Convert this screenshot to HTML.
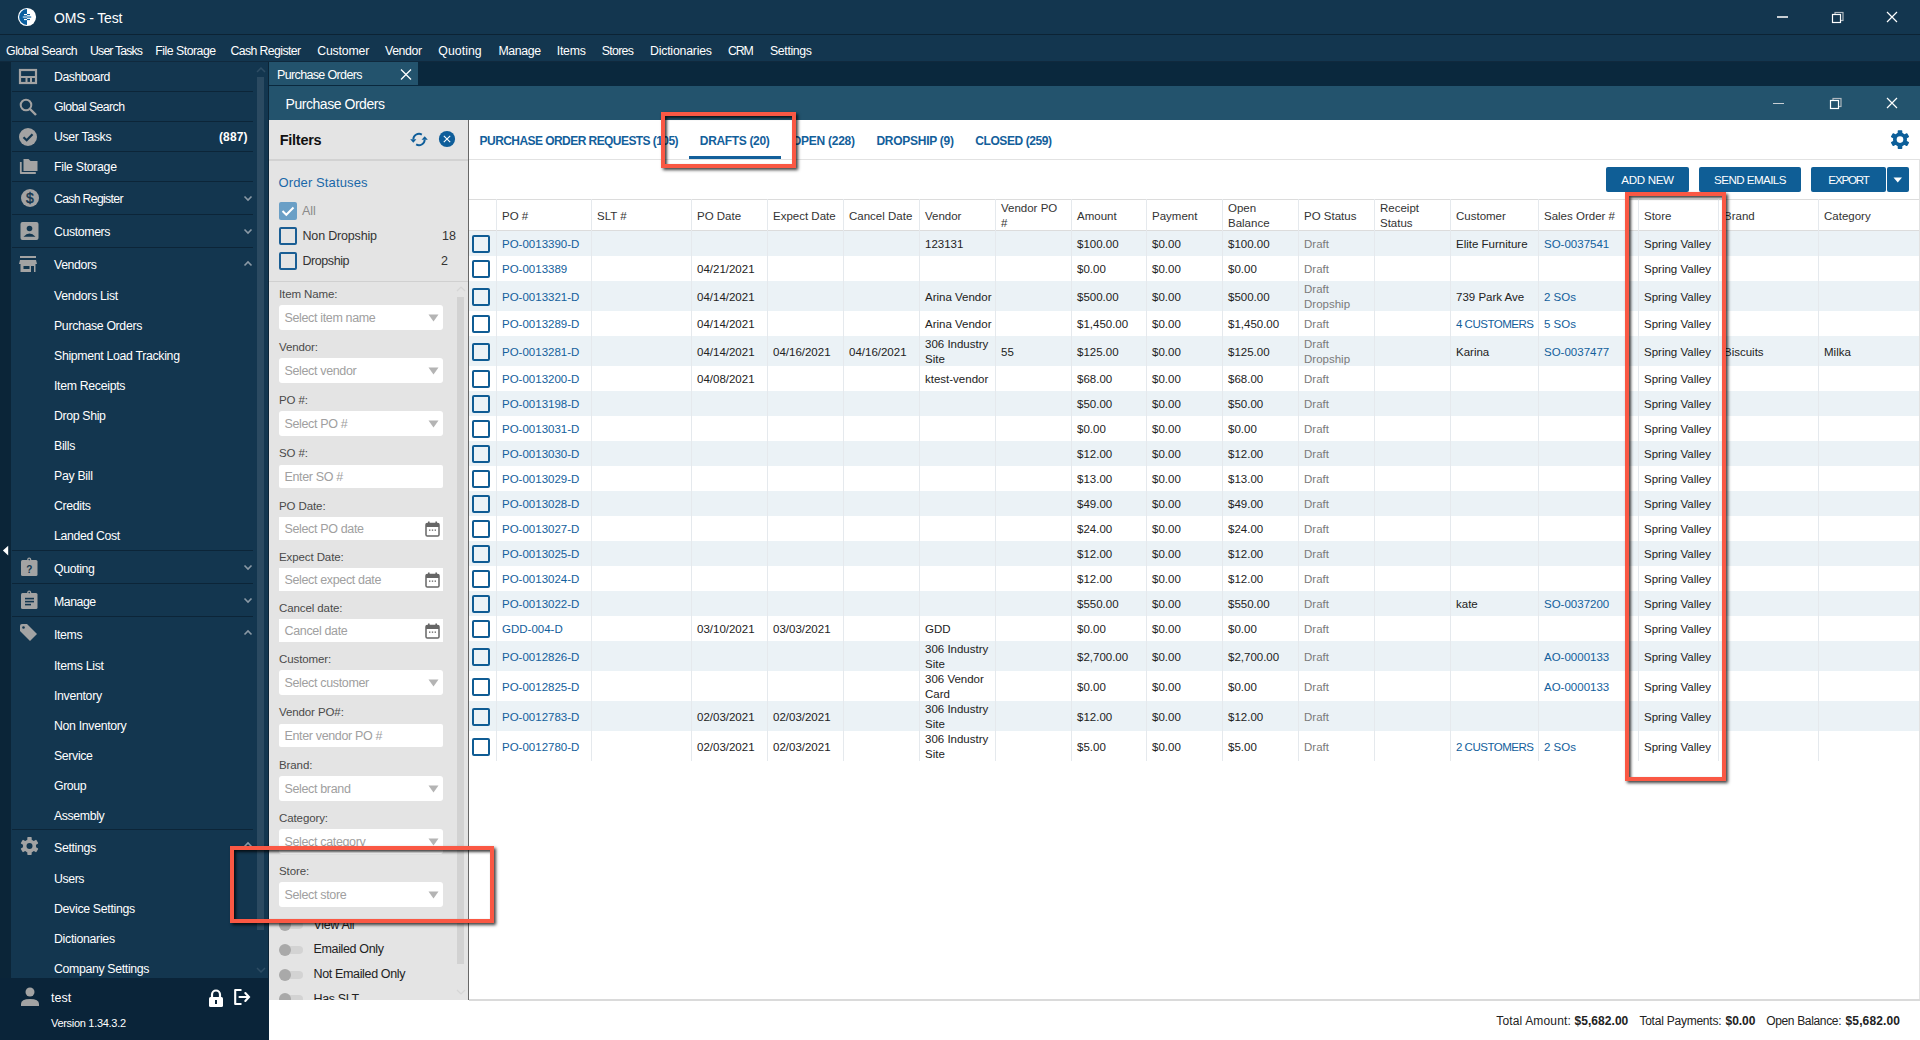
<!DOCTYPE html>
<html><head><meta charset="utf-8"><title>Purchase Orders</title>
<style>
html,body{margin:0;padding:0;width:1920px;height:1040px;overflow:hidden;background:#fff;}
body{position:relative;font-family:"Liberation Sans", sans-serif;}
body>div,body>svg{position:absolute;}
</style></head><body>
<div style="left:0px;top:0px;width:1920px;height:34px;background:#13364f;"></div>
<div style="left:0px;top:34px;width:1920px;height:1px;background:#0c2334;"></div>
<svg style="left:17px;top:7px;" width="20" height="20" viewBox="0 0 20 20"><circle cx="10" cy="10" r="9.1" fill="#fff"/><path d="M10 2.1 A7.9 7.9 0 0 0 10 17.9 Z" fill="#0b5f9f"/><rect x="7" y="7" width="3" height="1.2" fill="#fff"/><rect x="10" y="7" width="3" height="1.2" fill="#0b5f9f"/><rect x="5.8" y="9.3" width="4.2" height="1.5" fill="#a8c8de"/><rect x="10" y="9.3" width="4.2" height="1.5" fill="#3f86b8"/><rect x="7" y="11.9" width="3" height="1.2" fill="#fff"/><rect x="10" y="11.9" width="3" height="1.2" fill="#0b5f9f"/></svg>
<div style="left:54px;top:11.15px;font-size:14px;line-height:14px;color:#fff;font-weight:400;letter-spacing:-0.141px;white-space:nowrap;">OMS - Test</div>
<div style="left:1777px;top:16px;width:11px;height:1.5px;background:#c8ced3;"></div>
<svg style="left:1830px;top:10px;" width="16" height="14" viewBox="0 0 16 14"><rect x="5" y="2.5" width="8" height="8" fill="none" stroke="#aeb7bf" stroke-width="1.2"/><rect x="2.5" y="4.5" width="8" height="8" fill="#13364f" stroke="#fff" stroke-width="1.2"/></svg>
<svg style="left:1886px;top:11px;" width="12" height="12" viewBox="0 0 12 12"><path d="M1 1 L11 11 M11 1 L1 11" stroke="#fff" stroke-width="1.2"/></svg>
<div style="left:0px;top:35px;width:1920px;height:27px;background:#13364f;"></div>
<div style="left:0px;top:61px;width:1920px;height:1px;background:#10293d;"></div>
<div style="left:6.1px;top:44.59px;font-size:12.3px;line-height:12.3px;color:#fff;font-weight:400;letter-spacing:-0.528px;white-space:nowrap;">Global Search</div>
<div style="left:90.1px;top:44.59px;font-size:12.3px;line-height:12.3px;color:#fff;font-weight:400;letter-spacing:-0.866px;white-space:nowrap;">User Tasks</div>
<div style="left:155.3px;top:44.59px;font-size:12.3px;line-height:12.3px;color:#fff;font-weight:400;letter-spacing:-0.501px;white-space:nowrap;">File Storage</div>
<div style="left:230.4px;top:44.59px;font-size:12.3px;line-height:12.3px;color:#fff;font-weight:400;letter-spacing:-0.593px;white-space:nowrap;">Cash Register</div>
<div style="left:317.2px;top:44.59px;font-size:12.3px;line-height:12.3px;color:#fff;font-weight:400;letter-spacing:-0.173px;white-space:nowrap;">Customer</div>
<div style="left:385px;top:44.59px;font-size:12.3px;line-height:12.3px;color:#fff;font-weight:400;letter-spacing:-0.397px;white-space:nowrap;">Vendor</div>
<div style="left:438.3px;top:44.59px;font-size:12.3px;line-height:12.3px;color:#fff;font-weight:400;letter-spacing:0.054px;white-space:nowrap;">Quoting</div>
<div style="left:498.4px;top:44.59px;font-size:12.3px;line-height:12.3px;color:#fff;font-weight:400;letter-spacing:-0.351px;white-space:nowrap;">Manage</div>
<div style="left:556.8px;top:44.59px;font-size:12.3px;line-height:12.3px;color:#fff;font-weight:400;letter-spacing:-0.270px;white-space:nowrap;">Items</div>
<div style="left:601.8px;top:44.59px;font-size:12.3px;line-height:12.3px;color:#fff;font-weight:400;letter-spacing:-0.709px;white-space:nowrap;">Stores</div>
<div style="left:650px;top:44.59px;font-size:12.3px;line-height:12.3px;color:#fff;font-weight:400;letter-spacing:-0.205px;white-space:nowrap;">Dictionaries</div>
<div style="left:728px;top:44.59px;font-size:12.3px;line-height:12.3px;color:#fff;font-weight:400;letter-spacing:-1.108px;white-space:nowrap;">CRM</div>
<div style="left:770px;top:44.59px;font-size:12.3px;line-height:12.3px;color:#fff;font-weight:400;letter-spacing:-0.348px;white-space:nowrap;">Settings</div>
<div style="left:0px;top:62px;width:11px;height:978px;background:#0b2538;"></div>
<div style="left:11px;top:62px;width:257px;height:916px;background:#13364f;"></div>
<div style="left:268px;top:62px;width:1px;height:916px;background:#0c2436;"></div>
<div style="left:0px;top:978px;width:269px;height:62px;background:#0a2439;"></div>
<svg style="left:2px;top:545px;" width="8" height="12" viewBox="0 0 8 12"><path d="M6.2 0.7 v9.8 l-5.3 -4.9 z" fill="#fff"/></svg>
<div style="left:257px;top:77px;width:7px;height:853px;background:#2b4a61;"></div>
<svg style="left:255px;top:66px;" width="12" height="8" viewBox="0 0 12 8"><path d="M2 6 L6 2 L10 6" fill="none" stroke="#2e4d64" stroke-width="1.5"/></svg>
<svg style="left:255px;top:966px;" width="12" height="8" viewBox="0 0 12 8"><path d="M2 2 L6 6 L10 2" fill="none" stroke="#2e4d64" stroke-width="1.5"/></svg>
<div style="left:54px;top:71.09px;font-size:12.3px;line-height:12.3px;color:#fff;font-weight:400;letter-spacing:-0.471px;white-space:nowrap;">Dashboard</div>
<div style="left:54px;top:101.09px;font-size:12.3px;line-height:12.3px;color:#fff;font-weight:400;letter-spacing:-0.578px;white-space:nowrap;">Global Search</div>
<div style="left:54px;top:131.09px;font-size:12.3px;line-height:12.3px;color:#fff;font-weight:400;letter-spacing:-0.337px;white-space:nowrap;">User Tasks</div>
<div style="left:54px;top:161.09px;font-size:12.3px;line-height:12.3px;color:#fff;font-weight:400;letter-spacing:-0.301px;white-space:nowrap;">File Storage</div>
<div style="left:54px;top:192.59px;font-size:12.3px;line-height:12.3px;color:#fff;font-weight:400;letter-spacing:-0.702px;white-space:nowrap;">Cash Register</div>
<div style="left:54px;top:225.59px;font-size:12.3px;line-height:12.3px;color:#fff;font-weight:400;letter-spacing:-0.372px;white-space:nowrap;">Customers</div>
<div style="left:54px;top:259.09px;font-size:12.3px;line-height:12.3px;color:#fff;font-weight:400;letter-spacing:-0.376px;white-space:nowrap;">Vendors</div>
<div style="left:12px;top:91px;width:241px;height:1px;background:#0c2538;"></div>
<div style="left:12px;top:121px;width:241px;height:1px;background:#0c2538;"></div>
<div style="left:12px;top:151px;width:241px;height:1px;background:#0c2538;"></div>
<div style="left:12px;top:181px;width:241px;height:1px;background:#0c2538;"></div>
<div style="left:12px;top:214px;width:241px;height:1px;background:#0c2538;"></div>
<div style="left:12px;top:247px;width:241px;height:1px;background:#0c2538;"></div>
<div style="left:12px;top:550px;width:241px;height:1px;background:#0c2538;"></div>
<div style="left:12px;top:583px;width:241px;height:1px;background:#0c2538;"></div>
<div style="left:12px;top:616px;width:241px;height:1px;background:#0c2538;"></div>
<div style="left:12px;top:829px;width:241px;height:1px;background:#0c2538;"></div>
<div style="left:219px;top:130.84px;font-size:12px;line-height:12px;color:#fff;font-weight:700;letter-spacing:0.121px;white-space:nowrap;">(887)</div>
<svg style="left:243px;top:195px;" width="10" height="7" viewBox="0 0 10 7"><path d="M1.5 1.5 L5 5 L8.5 1.5" fill="none" stroke="#8a99a5" stroke-width="1.6"/></svg>
<svg style="left:243px;top:228px;" width="10" height="7" viewBox="0 0 10 7"><path d="M1.5 1.5 L5 5 L8.5 1.5" fill="none" stroke="#8a99a5" stroke-width="1.6"/></svg>
<svg style="left:243px;top:260px;" width="10" height="7" viewBox="0 0 10 7"><path d="M1.5 5.5 L5 2 L8.5 5.5" fill="none" stroke="#8a99a5" stroke-width="1.6"/></svg>
<div style="left:54px;top:290.09px;font-size:12.3px;line-height:12.3px;color:#fff;font-weight:400;letter-spacing:-0.308px;white-space:nowrap;">Vendors List</div>
<div style="left:54px;top:320.09px;font-size:12.3px;line-height:12.3px;color:#fff;font-weight:400;letter-spacing:-0.332px;white-space:nowrap;">Purchase Orders</div>
<div style="left:54px;top:350.09px;font-size:12.3px;line-height:12.3px;color:#fff;font-weight:400;letter-spacing:-0.316px;white-space:nowrap;">Shipment Load Tracking</div>
<div style="left:54px;top:380.09px;font-size:12.3px;line-height:12.3px;color:#fff;font-weight:400;letter-spacing:-0.313px;white-space:nowrap;">Item Receipts</div>
<div style="left:54px;top:410.09px;font-size:12.3px;line-height:12.3px;color:#fff;font-weight:400;letter-spacing:-0.342px;white-space:nowrap;">Drop Ship</div>
<div style="left:54px;top:440.09px;font-size:12.3px;line-height:12.3px;color:#fff;font-weight:400;letter-spacing:-0.282px;white-space:nowrap;">Bills</div>
<div style="left:54px;top:470.09px;font-size:12.3px;line-height:12.3px;color:#fff;font-weight:400;letter-spacing:-0.293px;white-space:nowrap;">Pay Bill</div>
<div style="left:54px;top:500.09px;font-size:12.3px;line-height:12.3px;color:#fff;font-weight:400;letter-spacing:-0.325px;white-space:nowrap;">Credits</div>
<div style="left:54px;top:530.09px;font-size:12.3px;line-height:12.3px;color:#fff;font-weight:400;letter-spacing:-0.349px;white-space:nowrap;">Landed Cost</div>
<div style="left:54px;top:562.59px;font-size:12.3px;line-height:12.3px;color:#fff;font-weight:400;letter-spacing:-0.359px;white-space:nowrap;">Quoting</div>
<div style="left:54px;top:595.59px;font-size:12.3px;line-height:12.3px;color:#fff;font-weight:400;letter-spacing:-0.445px;white-space:nowrap;">Manage</div>
<div style="left:54px;top:628.59px;font-size:12.3px;line-height:12.3px;color:#fff;font-weight:400;letter-spacing:-0.376px;white-space:nowrap;">Items</div>
<svg style="left:243px;top:564px;" width="10" height="7" viewBox="0 0 10 7"><path d="M1.5 1.5 L5 5 L8.5 1.5" fill="none" stroke="#8a99a5" stroke-width="1.6"/></svg>
<svg style="left:243px;top:597px;" width="10" height="7" viewBox="0 0 10 7"><path d="M1.5 1.5 L5 5 L8.5 1.5" fill="none" stroke="#8a99a5" stroke-width="1.6"/></svg>
<svg style="left:243px;top:629px;" width="10" height="7" viewBox="0 0 10 7"><path d="M1.5 5.5 L5 2 L8.5 5.5" fill="none" stroke="#8a99a5" stroke-width="1.6"/></svg>
<div style="left:54px;top:660.09px;font-size:12.3px;line-height:12.3px;color:#fff;font-weight:400;letter-spacing:-0.292px;white-space:nowrap;">Items List</div>
<div style="left:54px;top:690.09px;font-size:12.3px;line-height:12.3px;color:#fff;font-weight:400;letter-spacing:-0.316px;white-space:nowrap;">Inventory</div>
<div style="left:54px;top:720.09px;font-size:12.3px;line-height:12.3px;color:#fff;font-weight:400;letter-spacing:-0.319px;white-space:nowrap;">Non Inventory</div>
<div style="left:54px;top:750.09px;font-size:12.3px;line-height:12.3px;color:#fff;font-weight:400;letter-spacing:-0.342px;white-space:nowrap;">Service</div>
<div style="left:54px;top:780.09px;font-size:12.3px;line-height:12.3px;color:#fff;font-weight:400;letter-spacing:-0.427px;white-space:nowrap;">Group</div>
<div style="left:54px;top:810.09px;font-size:12.3px;line-height:12.3px;color:#fff;font-weight:400;letter-spacing:-0.381px;white-space:nowrap;">Assembly</div>
<div style="left:54px;top:841.59px;font-size:12.3px;line-height:12.3px;color:#fff;font-weight:400;letter-spacing:-0.317px;white-space:nowrap;">Settings</div>
<svg style="left:243px;top:841px;" width="10" height="7" viewBox="0 0 10 7"><path d="M1.5 5.5 L5 2 L8.5 5.5" fill="none" stroke="#8a99a5" stroke-width="1.6"/></svg>
<div style="left:54px;top:873.09px;font-size:12.3px;line-height:12.3px;color:#fff;font-weight:400;letter-spacing:-0.402px;white-space:nowrap;">Users</div>
<div style="left:54px;top:903.09px;font-size:12.3px;line-height:12.3px;color:#fff;font-weight:400;letter-spacing:-0.305px;white-space:nowrap;">Device Settings</div>
<div style="left:54px;top:933.09px;font-size:12.3px;line-height:12.3px;color:#fff;font-weight:400;letter-spacing:-0.292px;white-space:nowrap;">Dictionaries</div>
<div style="left:54px;top:963.09px;font-size:12.3px;line-height:12.3px;color:#fff;font-weight:400;letter-spacing:-0.335px;white-space:nowrap;">Company Settings</div>
<div style="left:0px;top:978px;width:269px;height:62px;background:#0a2439;"></div>
<div style="left:51px;top:992.42px;font-size:12.5px;line-height:12.5px;color:#fff;font-weight:400;letter-spacing:0.000px;white-space:nowrap;">test</div>
<div style="left:51px;top:1017.69px;font-size:11px;line-height:11px;color:#fff;font-weight:400;letter-spacing:-0.300px;white-space:nowrap;">Version 1.34.3.2</div>
<svg style="left:18px;top:68px;" width="20" height="17" viewBox="0 0 20 17"><rect x="2" y="2" width="16" height="13" fill="none" stroke="#a3a3a3" stroke-width="2.2"/><rect x="2" y="8" width="16" height="2" fill="#a3a3a3"/><rect x="7.5" y="9" width="2" height="6" fill="#a3a3a3"/><rect x="12" y="9" width="2" height="6" fill="#a3a3a3"/></svg>
<svg style="left:18px;top:97px;" width="20" height="20" viewBox="0 0 20 20"><circle cx="8" cy="8" r="5.3" fill="none" stroke="#a3a3a3" stroke-width="2"/><path d="M12 12 L18 18" stroke="#a3a3a3" stroke-width="2.4"/></svg>
<svg style="left:18px;top:127px;" width="20" height="20" viewBox="0 0 20 20"><circle cx="10" cy="10" r="9" fill="#a3a3a3"/><path d="M5.5 10.2 L8.7 13.3 L14.5 7.2" fill="none" stroke="#13364f" stroke-width="2.2"/></svg>
<svg style="left:19px;top:157px;" width="20" height="18" viewBox="0 0 20 18"><path d="M4.5 2 h5 l2 2 h7 v10 h-14 z" fill="#a3a3a3"/><path d="M1.8 5 v11 h15" fill="none" stroke="#a3a3a3" stroke-width="1.8" stroke-linejoin="round"/></svg>
<svg style="left:19.5px;top:188px;" width="20" height="20" viewBox="0 0 20 20"><circle cx="10" cy="10" r="9" fill="#a3a3a3"/><text x="10" y="15" font-family="Liberation Sans" font-weight="400" font-size="14" text-anchor="middle" fill="#13364f" stroke="#13364f" stroke-width="0.4">$</text></svg>
<svg style="left:19px;top:221px;" width="20" height="20" viewBox="0 0 20 20"><rect x="1.5" y="1" width="18" height="18" rx="2" fill="#a3a3a3"/><circle cx="10.5" cy="7.5" r="2.8" fill="#13364f"/><path d="M4.5 15.8 q6 -6.5 12 0 z" fill="#13364f"/></svg>
<svg style="left:18px;top:255px;" width="20" height="19" viewBox="0 0 20 19"><rect x="2" y="1" width="16" height="2" fill="#a3a3a3"/><path d="M2 5 h16 l1 4 h-18 z" fill="#a3a3a3"/><rect x="2.5" y="9" width="15" height="8" fill="#a3a3a3"/><rect x="5.5" y="11" width="6" height="3" fill="#13364f"/><rect x="13" y="11" width="3" height="6" fill="#13364f"/></svg>
<svg style="left:18px;top:557px;" width="21" height="20" viewBox="0 0 21 20"><rect x="3" y="3" width="16.5" height="16" rx="1.5" fill="#a3a3a3"/><circle cx="11.2" cy="2.6" r="2" fill="#a3a3a3"/><circle cx="11.2" cy="2.6" r="0.8" fill="#13364f"/><text x="11.2" y="15.5" font-family="Liberation Sans" font-weight="700" font-size="10" text-anchor="middle" fill="#13364f">?</text></svg>
<svg style="left:18px;top:590px;" width="21" height="20" viewBox="0 0 21 20"><rect x="3" y="3" width="16.5" height="16" rx="1.5" fill="#a3a3a3"/><circle cx="11.2" cy="2.6" r="2" fill="#a3a3a3"/><circle cx="11.2" cy="2.6" r="0.8" fill="#13364f"/><rect x="7" y="7.8" width="9" height="1.6" fill="#13364f"/><rect x="7" y="10.8" width="9" height="1.6" fill="#13364f"/><rect x="7" y="13.8" width="6" height="1.6" fill="#13364f"/></svg>
<svg style="left:18px;top:623px;" width="20" height="20" viewBox="0 0 20 20"><path d="M2 3 q0 -2 2 -2 h5 l10 10 l-7 7 l-10 -10 z" fill="#a3a3a3"/><circle cx="5.5" cy="4.5" r="1.3" fill="#13364f"/></svg>
<svg style="left:19px;top:836px;" width="21" height="20" viewBox="0 0 21 20"><circle cx="10.5" cy="10" r="6.6" fill="#a3a3a3"/><rect x="8.3" y="1.0" width="4.4" height="4.4" rx="0.7" fill="#a3a3a3" transform="rotate(0 10.5 10)"/><rect x="8.3" y="1.0" width="4.4" height="4.4" rx="0.7" fill="#a3a3a3" transform="rotate(60 10.5 10)"/><rect x="8.3" y="1.0" width="4.4" height="4.4" rx="0.7" fill="#a3a3a3" transform="rotate(120 10.5 10)"/><rect x="8.3" y="1.0" width="4.4" height="4.4" rx="0.7" fill="#a3a3a3" transform="rotate(180 10.5 10)"/><rect x="8.3" y="1.0" width="4.4" height="4.4" rx="0.7" fill="#a3a3a3" transform="rotate(240 10.5 10)"/><rect x="8.3" y="1.0" width="4.4" height="4.4" rx="0.7" fill="#a3a3a3" transform="rotate(300 10.5 10)"/><circle cx="10.5" cy="10" r="3.0" fill="#13364f"/></svg>
<svg style="left:20px;top:987px;" width="20" height="20" viewBox="0 0 20 20"><circle cx="10" cy="5" r="4.5" fill="#a3a3a3"/><path d="M1 19 v-2 q0 -5 9 -5 q9 0 9 5 v2 z" fill="#a3a3a3"/></svg>
<svg style="left:208px;top:988.6px;" width="16" height="18" viewBox="0 0 16 18"><path d="M4 8 v-2.5 a4 4 0 0 1 8 0 v2.5" fill="none" stroke="#fff" stroke-width="2.2"/><rect x="1" y="8" width="14" height="10" rx="1.5" fill="#fff"/><rect x="7" y="11" width="2" height="4" fill="#0a2439"/></svg>
<svg style="left:233px;top:988px;" width="18" height="18" viewBox="0 0 18 18"><path d="M8.5 2 h-6.3 v14 h6.3" fill="none" stroke="#fff" stroke-width="2.1" stroke-linejoin="round"/><path d="M6.5 9 h9 M12.3 5 L16 9 L12.3 13" fill="none" stroke="#fff" stroke-width="2.1" stroke-linecap="round"/></svg>
<div style="left:269px;top:62px;width:1651px;height:24px;background:#0a283d;"></div>
<div style="left:269px;top:62px;width:149px;height:23px;background:#23536d;"></div>
<div style="left:277px;top:68.92px;font-size:12.5px;line-height:12.5px;color:#fff;font-weight:400;letter-spacing:-0.642px;white-space:nowrap;">Purchase Orders</div>
<svg style="left:400px;top:69px;" width="12" height="11" viewBox="0 0 12 11"><path d="M1 0.5 L11 10.5 M11 0.5 L1 10.5" stroke="#fff" stroke-width="1.3"/></svg>
<div style="left:269px;top:86px;width:1651px;height:34px;background:#23536d;"></div>
<div style="left:285.5px;top:97.45px;font-size:14px;line-height:14px;color:#fff;font-weight:400;letter-spacing:-0.452px;white-space:nowrap;">Purchase Orders</div>
<div style="left:1773px;top:102.5px;width:11px;height:1.5px;background:#c8ced3;"></div>
<svg style="left:1828px;top:96px;" width="16" height="14" viewBox="0 0 16 14"><rect x="5" y="2.5" width="8" height="8" fill="none" stroke="#aeb7bf" stroke-width="1.2"/><rect x="2.5" y="4.5" width="8" height="8" fill="#23536d" stroke="#fff" stroke-width="1.2"/></svg>
<svg style="left:1886px;top:97px;" width="12" height="12" viewBox="0 0 12 12"><path d="M1 1 L11 11 M11 1 L1 11" stroke="#fff" stroke-width="1.2"/></svg>
<div style="left:269px;top:120px;width:199px;height:880px;background:#e4e4e4;"></div>
<div style="left:468px;top:120px;width:1px;height:880px;background:#676767;"></div>
<div style="left:279.7px;top:132.73px;font-size:14.5px;line-height:14.5px;color:#111;font-weight:700;letter-spacing:-0.253px;white-space:nowrap;">Filters</div>
<svg style="left:408px;top:130px;" width="22" height="18" viewBox="0 0 22 18"><path d="M13.85 4.56 A5.7 5.7 0 0 0 5.3 9.3" fill="none" stroke="#0f5e9a" stroke-width="1.9"/><path d="M2.2 9.3 h6.2 l-3.1 3.4 z" fill="#0f5e9a"/><path d="M8.15 14.44 A5.7 5.7 0 0 0 16.7 9.7" fill="none" stroke="#0f5e9a" stroke-width="1.9"/><path d="M13.6 9.7 h6.2 l-3.1 -3.4 z" fill="#0f5e9a"/></svg>
<svg style="left:438px;top:130px;" width="18" height="18" viewBox="0 0 18 18"><circle cx="9" cy="9" r="8.1" fill="#0f5e9a"/><path d="M5.8 5.8 L12.2 12.2 M12.2 5.8 L5.8 12.2" stroke="#fff" stroke-width="1.1"/></svg>
<div style="left:269px;top:159px;width:199px;height:2px;background:#d2d2d2;"></div>
<div style="left:278.5px;top:176.00px;font-size:13px;line-height:13px;color:#1a68a8;font-weight:400;letter-spacing:0.120px;white-space:nowrap;">Order Statuses</div>
<div style="left:279px;top:202px;width:18px;height:18px;background:#6a9fc6;border-radius:2px;"></div>
<svg style="left:279px;top:202px;" width="18" height="18" viewBox="0 0 18 18"><path d="M3.5 9 L7.3 12.8 L14.5 5.5" fill="none" stroke="#fff" stroke-width="2"/></svg>
<div style="left:302px;top:205.22px;font-size:12.5px;line-height:12.5px;color:#8a8a8a;font-weight:400;letter-spacing:0.000px;white-space:nowrap;">All</div>
<div style="left:279px;top:227px;width:18px;height:18px;background:transparent;border:2px solid #1a5e94;border-radius:2px;box-sizing:border-box;"></div>
<div style="left:302.5px;top:229.72px;font-size:12.5px;line-height:12.5px;color:#333;font-weight:400;letter-spacing:-0.176px;white-space:nowrap;">Non Dropship</div>
<div style="left:442px;top:229.72px;font-size:12.5px;line-height:12.5px;color:#333;font-weight:400;letter-spacing:0.000px;white-space:nowrap;">18</div>
<div style="left:279px;top:252px;width:18px;height:18px;background:transparent;border:2px solid #1a5e94;border-radius:2px;box-sizing:border-box;"></div>
<div style="left:302.5px;top:254.72px;font-size:12.5px;line-height:12.5px;color:#333;font-weight:400;letter-spacing:-0.433px;white-space:nowrap;">Dropship</div>
<div style="left:441px;top:254.72px;font-size:12.5px;line-height:12.5px;color:#333;font-weight:400;letter-spacing:0.000px;white-space:nowrap;">2</div>
<div style="left:269px;top:281px;width:199px;height:1px;background:#d0d0d0;"></div>
<div style="left:457px;top:297px;width:7px;height:667px;background:#d2d2d2;"></div>
<svg style="left:455px;top:285px;" width="12" height="8" viewBox="0 0 12 8"><path d="M2 6 L6 2 L10 6" fill="none" stroke="#d6d6d6" stroke-width="1.2"/></svg>
<svg style="left:455px;top:988px;" width="12" height="8" viewBox="0 0 12 8"><path d="M2 2 L6 6 L10 2" fill="none" stroke="#d6d6d6" stroke-width="1.2"/></svg>
<div style="left:279px;top:289.07px;font-size:11.5px;line-height:11.5px;color:#4a4a4a;font-weight:400;letter-spacing:-0.100px;white-space:nowrap;">Item Name:</div>
<div style="left:279px;top:305px;width:164px;height:25px;background:#fff;border-radius:3px;"></div>
<div style="left:284.5px;top:312.12px;font-size:12.5px;line-height:12.5px;color:#a0a0a0;font-weight:400;letter-spacing:-0.350px;white-space:nowrap;">Select item name</div>
<svg style="left:428px;top:314.0px;" width="11" height="8" viewBox="0 0 11 8"><path d="M0.5 0.5 h10 l-5 7 z" fill="#b4b4b4"/></svg>
<div style="left:279px;top:342.07px;font-size:11.5px;line-height:11.5px;color:#4a4a4a;font-weight:400;letter-spacing:-0.100px;white-space:nowrap;">Vendor:</div>
<div style="left:279px;top:358px;width:164px;height:25px;background:#fff;border-radius:3px;"></div>
<div style="left:284.5px;top:365.12px;font-size:12.5px;line-height:12.5px;color:#a0a0a0;font-weight:400;letter-spacing:-0.350px;white-space:nowrap;">Select vendor</div>
<svg style="left:428px;top:367.0px;" width="11" height="8" viewBox="0 0 11 8"><path d="M0.5 0.5 h10 l-5 7 z" fill="#b4b4b4"/></svg>
<div style="left:279px;top:395.07px;font-size:11.5px;line-height:11.5px;color:#4a4a4a;font-weight:400;letter-spacing:-0.100px;white-space:nowrap;">PO #:</div>
<div style="left:279px;top:411px;width:164px;height:25px;background:#fff;border-radius:3px;"></div>
<div style="left:284.5px;top:418.12px;font-size:12.5px;line-height:12.5px;color:#a0a0a0;font-weight:400;letter-spacing:-0.350px;white-space:nowrap;">Select PO #</div>
<svg style="left:428px;top:420.0px;" width="11" height="8" viewBox="0 0 11 8"><path d="M0.5 0.5 h10 l-5 7 z" fill="#b4b4b4"/></svg>
<div style="left:279px;top:448.07px;font-size:11.5px;line-height:11.5px;color:#4a4a4a;font-weight:400;letter-spacing:-0.100px;white-space:nowrap;">SO #:</div>
<div style="left:279px;top:465px;width:164px;height:23px;background:#fff;border-radius:2px;"></div>
<div style="left:284.5px;top:471.12px;font-size:12.5px;line-height:12.5px;color:#a0a0a0;font-weight:400;letter-spacing:-0.350px;white-space:nowrap;">Enter SO #</div>
<div style="left:279px;top:501.07px;font-size:11.5px;line-height:11.5px;color:#4a4a4a;font-weight:400;letter-spacing:-0.100px;white-space:nowrap;">PO Date:</div>
<div style="left:279px;top:517px;width:164px;height:23px;background:#fff;"></div>
<div style="left:284.5px;top:523.12px;font-size:12.5px;line-height:12.5px;color:#a0a0a0;font-weight:400;letter-spacing:-0.350px;white-space:nowrap;">Select PO date</div>
<svg style="left:425px;top:521px;" width="15" height="16" viewBox="0 0 15 16"><rect x="1" y="2.5" width="13" height="12.5" rx="1.3" fill="none" stroke="#666" stroke-width="1.5"/><rect x="1" y="2.5" width="13" height="3.5" fill="#666"/><rect x="3" y="0.5" width="1.6" height="3" fill="#666"/><rect x="10.4" y="0.5" width="1.6" height="3" fill="#666"/><rect x="4" y="8.5" width="1.4" height="1.3" fill="#666"/><rect x="6.8" y="8.5" width="1.4" height="1.3" fill="#666"/><rect x="9.6" y="8.5" width="1.4" height="1.3" fill="#666"/></svg>
<div style="left:279px;top:552.07px;font-size:11.5px;line-height:11.5px;color:#4a4a4a;font-weight:400;letter-spacing:-0.100px;white-space:nowrap;">Expect Date:</div>
<div style="left:279px;top:568px;width:164px;height:23px;background:#fff;"></div>
<div style="left:284.5px;top:574.12px;font-size:12.5px;line-height:12.5px;color:#a0a0a0;font-weight:400;letter-spacing:-0.350px;white-space:nowrap;">Select expect date</div>
<svg style="left:425px;top:572px;" width="15" height="16" viewBox="0 0 15 16"><rect x="1" y="2.5" width="13" height="12.5" rx="1.3" fill="none" stroke="#666" stroke-width="1.5"/><rect x="1" y="2.5" width="13" height="3.5" fill="#666"/><rect x="3" y="0.5" width="1.6" height="3" fill="#666"/><rect x="10.4" y="0.5" width="1.6" height="3" fill="#666"/><rect x="4" y="8.5" width="1.4" height="1.3" fill="#666"/><rect x="6.8" y="8.5" width="1.4" height="1.3" fill="#666"/><rect x="9.6" y="8.5" width="1.4" height="1.3" fill="#666"/></svg>
<div style="left:279px;top:603.07px;font-size:11.5px;line-height:11.5px;color:#4a4a4a;font-weight:400;letter-spacing:-0.100px;white-space:nowrap;">Cancel date:</div>
<div style="left:279px;top:619px;width:164px;height:23px;background:#fff;"></div>
<div style="left:284.5px;top:625.12px;font-size:12.5px;line-height:12.5px;color:#a0a0a0;font-weight:400;letter-spacing:-0.350px;white-space:nowrap;">Cancel date</div>
<svg style="left:425px;top:623px;" width="15" height="16" viewBox="0 0 15 16"><rect x="1" y="2.5" width="13" height="12.5" rx="1.3" fill="none" stroke="#666" stroke-width="1.5"/><rect x="1" y="2.5" width="13" height="3.5" fill="#666"/><rect x="3" y="0.5" width="1.6" height="3" fill="#666"/><rect x="10.4" y="0.5" width="1.6" height="3" fill="#666"/><rect x="4" y="8.5" width="1.4" height="1.3" fill="#666"/><rect x="6.8" y="8.5" width="1.4" height="1.3" fill="#666"/><rect x="9.6" y="8.5" width="1.4" height="1.3" fill="#666"/></svg>
<div style="left:279px;top:654.07px;font-size:11.5px;line-height:11.5px;color:#4a4a4a;font-weight:400;letter-spacing:-0.100px;white-space:nowrap;">Customer:</div>
<div style="left:279px;top:670px;width:164px;height:25px;background:#fff;border-radius:3px;"></div>
<div style="left:284.5px;top:677.12px;font-size:12.5px;line-height:12.5px;color:#a0a0a0;font-weight:400;letter-spacing:-0.350px;white-space:nowrap;">Select customer</div>
<svg style="left:428px;top:679.0px;" width="11" height="8" viewBox="0 0 11 8"><path d="M0.5 0.5 h10 l-5 7 z" fill="#b4b4b4"/></svg>
<div style="left:279px;top:707.07px;font-size:11.5px;line-height:11.5px;color:#4a4a4a;font-weight:400;letter-spacing:-0.100px;white-space:nowrap;">Vendor PO#:</div>
<div style="left:279px;top:724px;width:164px;height:23px;background:#fff;border-radius:2px;"></div>
<div style="left:284.5px;top:730.12px;font-size:12.5px;line-height:12.5px;color:#a0a0a0;font-weight:400;letter-spacing:-0.350px;white-space:nowrap;">Enter vendor PO #</div>
<div style="left:279px;top:760.07px;font-size:11.5px;line-height:11.5px;color:#4a4a4a;font-weight:400;letter-spacing:-0.100px;white-space:nowrap;">Brand:</div>
<div style="left:279px;top:776px;width:164px;height:25px;background:#fff;border-radius:3px;"></div>
<div style="left:284.5px;top:783.12px;font-size:12.5px;line-height:12.5px;color:#a0a0a0;font-weight:400;letter-spacing:-0.350px;white-space:nowrap;">Select brand</div>
<svg style="left:428px;top:785.0px;" width="11" height="8" viewBox="0 0 11 8"><path d="M0.5 0.5 h10 l-5 7 z" fill="#b4b4b4"/></svg>
<div style="left:279px;top:813.07px;font-size:11.5px;line-height:11.5px;color:#4a4a4a;font-weight:400;letter-spacing:-0.100px;white-space:nowrap;">Category:</div>
<div style="left:279px;top:829px;width:164px;height:25px;background:#fff;border-radius:3px;"></div>
<div style="left:284.5px;top:836.12px;font-size:12.5px;line-height:12.5px;color:#a0a0a0;font-weight:400;letter-spacing:-0.350px;white-space:nowrap;">Select category</div>
<svg style="left:428px;top:838.0px;" width="11" height="8" viewBox="0 0 11 8"><path d="M0.5 0.5 h10 l-5 7 z" fill="#b4b4b4"/></svg>
<div style="left:279px;top:866.47px;font-size:11.5px;line-height:11.5px;color:#4a4a4a;font-weight:400;letter-spacing:-0.100px;white-space:nowrap;">Store:</div>
<div style="left:279px;top:882px;width:164px;height:25px;background:#fff;border-radius:3px;"></div>
<div style="left:284.5px;top:889.12px;font-size:12.5px;line-height:12.5px;color:#a0a0a0;font-weight:400;letter-spacing:-0.350px;white-space:nowrap;">Select store</div>
<svg style="left:428px;top:891.0px;" width="11" height="8" viewBox="0 0 11 8"><path d="M0.5 0.5 h10 l-5 7 z" fill="#b4b4b4"/></svg>
<div style="left:281px;top:921px;width:22px;height:8px;background:#d3d3d3;border-radius:4px;"></div>
<div style="left:279px;top:919px;width:12px;height:12px;background:#a9a9a9;border-radius:6px;"></div>
<div style="left:313.5px;top:918.82px;font-size:12.5px;line-height:12.5px;color:#222;font-weight:400;letter-spacing:-0.350px;white-space:nowrap;">View All</div>
<div style="left:281px;top:945.5px;width:22px;height:8px;background:#d3d3d3;border-radius:4px;"></div>
<div style="left:279px;top:943.5px;width:12px;height:12px;background:#a9a9a9;border-radius:6px;"></div>
<div style="left:313.5px;top:943.32px;font-size:12.5px;line-height:12.5px;color:#222;font-weight:400;letter-spacing:-0.350px;white-space:nowrap;">Emailed Only</div>
<div style="left:281px;top:970.5px;width:22px;height:8px;background:#d3d3d3;border-radius:4px;"></div>
<div style="left:279px;top:968.5px;width:12px;height:12px;background:#a9a9a9;border-radius:6px;"></div>
<div style="left:313.5px;top:968.32px;font-size:12.5px;line-height:12.5px;color:#222;font-weight:400;letter-spacing:-0.350px;white-space:nowrap;">Not Emailed Only</div>
<div style="left:281px;top:995px;width:22px;height:8px;background:#d3d3d3;border-radius:4px;"></div>
<div style="left:279px;top:993px;width:12px;height:12px;background:#a9a9a9;border-radius:6px;"></div>
<div style="left:313.5px;top:992.82px;font-size:12.5px;line-height:12.5px;color:#222;font-weight:400;letter-spacing:-0.350px;white-space:nowrap;">Has SLT</div>
<div style="left:269px;top:1000px;width:1651px;height:40px;background:#fff;"></div>
<div style="left:469px;top:120px;width:1451px;height:879px;background:#fff;"></div>
<div style="left:479.6px;top:134.84px;font-size:12px;line-height:12px;color:#13609b;font-weight:700;letter-spacing:-0.561px;white-space:nowrap;">PURCHASE ORDER REQUESTS (105)</div>
<div style="left:699.8px;top:134.84px;font-size:12px;line-height:12px;color:#13609b;font-weight:700;letter-spacing:-0.334px;white-space:nowrap;">DRAFTS (20)</div>
<div style="left:792px;top:134.84px;font-size:12px;line-height:12px;color:#13609b;font-weight:700;letter-spacing:-0.262px;white-space:nowrap;">OPEN (228)</div>
<div style="left:876.4px;top:134.84px;font-size:12px;line-height:12px;color:#13609b;font-weight:700;letter-spacing:-0.261px;white-space:nowrap;">DROPSHIP (9)</div>
<div style="left:975.3px;top:134.84px;font-size:12px;line-height:12px;color:#13609b;font-weight:700;letter-spacing:-0.424px;white-space:nowrap;">CLOSED (259)</div>
<div style="left:689px;top:156px;width:92px;height:3px;background:#13609b;"></div>
<div style="left:469px;top:159px;width:1451px;height:1px;background:#e2e2e2;"></div>
<div style="left:1919px;top:159px;width:1px;height:840px;background:#e2e2e2;"></div>
<svg style="left:1890px;top:130px;" width="20" height="20" viewBox="0 0 20 20"><circle cx="10" cy="9.6" r="7.0" fill="#0d5f9a"/><rect x="7.7" y="0.1999999999999993" width="4.6" height="4.4" rx="0.7" fill="#0d5f9a" transform="rotate(0 10 9.6)"/><rect x="7.7" y="0.1999999999999993" width="4.6" height="4.4" rx="0.7" fill="#0d5f9a" transform="rotate(60 10 9.6)"/><rect x="7.7" y="0.1999999999999993" width="4.6" height="4.4" rx="0.7" fill="#0d5f9a" transform="rotate(120 10 9.6)"/><rect x="7.7" y="0.1999999999999993" width="4.6" height="4.4" rx="0.7" fill="#0d5f9a" transform="rotate(180 10 9.6)"/><rect x="7.7" y="0.1999999999999993" width="4.6" height="4.4" rx="0.7" fill="#0d5f9a" transform="rotate(240 10 9.6)"/><rect x="7.7" y="0.1999999999999993" width="4.6" height="4.4" rx="0.7" fill="#0d5f9a" transform="rotate(300 10 9.6)"/><circle cx="10" cy="9.6" r="3.3" fill="#fff"/></svg>
<div style="left:1606px;top:167px;width:83px;height:25px;background:#0f5e96;border-radius:2px;"></div>
<div style="left:1447.5px;width:400px;text-align:center;top:174.18px;font-size:11.6px;line-height:11.6px;color:#fff;font-weight:400;letter-spacing:-0.342px;white-space:nowrap;">ADD NEW</div>
<div style="left:1699px;top:167px;width:102px;height:25px;background:#0f5e96;border-radius:2px;"></div>
<div style="left:1550.0px;width:400px;text-align:center;top:174.18px;font-size:11.6px;line-height:11.6px;color:#fff;font-weight:400;letter-spacing:-0.547px;white-space:nowrap;">SEND EMAILS</div>
<div style="left:1811px;top:167px;width:75px;height:25px;background:#0f5e96;border-radius:2px;"></div>
<div style="left:1648.5px;width:400px;text-align:center;top:174.18px;font-size:11.6px;line-height:11.6px;color:#fff;font-weight:400;letter-spacing:-1.194px;white-space:nowrap;">EXPORT</div>
<div style="left:1887px;top:167px;width:22px;height:25px;background:#0f5e96;border-radius:2px;"></div>
<svg style="left:1893px;top:177px;" width="10" height="6" viewBox="0 0 10 6"><path d="M0.5 0.5 h8.5 l-4.25 5 z" fill="#fff"/></svg>
<div style="left:469px;top:199px;width:1450px;height:1px;background:#dcdcdc;"></div>
<div style="left:469px;top:230px;width:1450px;height:1px;background:#dcdcdc;"></div>
<div style="left:469px;top:231px;width:1450px;height:25px;background:#ebf2f6;"></div>
<div style="left:469px;top:281px;width:1450px;height:30px;background:#ebf2f6;"></div>
<div style="left:469px;top:336px;width:1450px;height:30px;background:#ebf2f6;"></div>
<div style="left:469px;top:391px;width:1450px;height:25px;background:#ebf2f6;"></div>
<div style="left:469px;top:441px;width:1450px;height:25px;background:#ebf2f6;"></div>
<div style="left:469px;top:491px;width:1450px;height:25px;background:#ebf2f6;"></div>
<div style="left:469px;top:541px;width:1450px;height:25px;background:#ebf2f6;"></div>
<div style="left:469px;top:591px;width:1450px;height:25px;background:#ebf2f6;"></div>
<div style="left:469px;top:641px;width:1450px;height:30px;background:#ebf2f6;"></div>
<div style="left:469px;top:701px;width:1450px;height:30px;background:#ebf2f6;"></div>
<div style="left:496px;top:199px;width:1px;height:562px;background:#e5e9ed;"></div>
<div style="left:591px;top:199px;width:1px;height:562px;background:#e5e9ed;"></div>
<div style="left:691px;top:199px;width:1px;height:562px;background:#e5e9ed;"></div>
<div style="left:767px;top:199px;width:1px;height:562px;background:#e5e9ed;"></div>
<div style="left:843px;top:199px;width:1px;height:562px;background:#e5e9ed;"></div>
<div style="left:919px;top:199px;width:1px;height:562px;background:#e5e9ed;"></div>
<div style="left:995px;top:199px;width:1px;height:562px;background:#e5e9ed;"></div>
<div style="left:1071px;top:199px;width:1px;height:562px;background:#e5e9ed;"></div>
<div style="left:1146px;top:199px;width:1px;height:562px;background:#e5e9ed;"></div>
<div style="left:1222px;top:199px;width:1px;height:562px;background:#e5e9ed;"></div>
<div style="left:1298px;top:199px;width:1px;height:562px;background:#e5e9ed;"></div>
<div style="left:1374px;top:199px;width:1px;height:562px;background:#e5e9ed;"></div>
<div style="left:1450px;top:199px;width:1px;height:562px;background:#e5e9ed;"></div>
<div style="left:1538px;top:199px;width:1px;height:562px;background:#e5e9ed;"></div>
<div style="left:1638px;top:199px;width:1px;height:562px;background:#e5e9ed;"></div>
<div style="left:1718px;top:199px;width:1px;height:562px;background:#e5e9ed;"></div>
<div style="left:1818px;top:199px;width:1px;height:562px;background:#e5e9ed;"></div>
<div style="left:502px;top:211.07px;font-size:11.5px;line-height:11.5px;color:#333;font-weight:400;letter-spacing:0.000px;white-space:nowrap;">PO #</div>
<div style="left:597px;top:211.07px;font-size:11.5px;line-height:11.5px;color:#333;font-weight:400;letter-spacing:0.000px;white-space:nowrap;">SLT #</div>
<div style="left:697px;top:211.07px;font-size:11.5px;line-height:11.5px;color:#333;font-weight:400;letter-spacing:0.000px;white-space:nowrap;">PO Date</div>
<div style="left:773px;top:211.07px;font-size:11.5px;line-height:11.5px;color:#333;font-weight:400;letter-spacing:0.000px;white-space:nowrap;">Expect Date</div>
<div style="left:849px;top:211.07px;font-size:11.5px;line-height:11.5px;color:#333;font-weight:400;letter-spacing:0.000px;white-space:nowrap;">Cancel Date</div>
<div style="left:925px;top:211.07px;font-size:11.5px;line-height:11.5px;color:#333;font-weight:400;letter-spacing:0.000px;white-space:nowrap;">Vendor</div>
<div style="left:1001px;top:203.07px;font-size:11.5px;line-height:11.5px;color:#333;font-weight:400;letter-spacing:0.000px;white-space:nowrap;">Vendor PO</div>
<div style="left:1001px;top:217.57px;font-size:11.5px;line-height:11.5px;color:#333;font-weight:400;letter-spacing:0.000px;white-space:nowrap;">#</div>
<div style="left:1077px;top:211.07px;font-size:11.5px;line-height:11.5px;color:#333;font-weight:400;letter-spacing:0.000px;white-space:nowrap;">Amount</div>
<div style="left:1152px;top:211.07px;font-size:11.5px;line-height:11.5px;color:#333;font-weight:400;letter-spacing:0.000px;white-space:nowrap;">Payment</div>
<div style="left:1228px;top:203.07px;font-size:11.5px;line-height:11.5px;color:#333;font-weight:400;letter-spacing:0.000px;white-space:nowrap;">Open</div>
<div style="left:1228px;top:217.57px;font-size:11.5px;line-height:11.5px;color:#333;font-weight:400;letter-spacing:0.000px;white-space:nowrap;">Balance</div>
<div style="left:1304px;top:211.07px;font-size:11.5px;line-height:11.5px;color:#333;font-weight:400;letter-spacing:0.000px;white-space:nowrap;">PO Status</div>
<div style="left:1380px;top:203.07px;font-size:11.5px;line-height:11.5px;color:#333;font-weight:400;letter-spacing:0.000px;white-space:nowrap;">Receipt</div>
<div style="left:1380px;top:217.57px;font-size:11.5px;line-height:11.5px;color:#333;font-weight:400;letter-spacing:0.000px;white-space:nowrap;">Status</div>
<div style="left:1456px;top:211.07px;font-size:11.5px;line-height:11.5px;color:#333;font-weight:400;letter-spacing:0.000px;white-space:nowrap;">Customer</div>
<div style="left:1544px;top:211.07px;font-size:11.5px;line-height:11.5px;color:#333;font-weight:400;letter-spacing:0.000px;white-space:nowrap;">Sales Order #</div>
<div style="left:1644px;top:211.07px;font-size:11.5px;line-height:11.5px;color:#333;font-weight:400;letter-spacing:0.000px;white-space:nowrap;">Store</div>
<div style="left:1724px;top:211.07px;font-size:11.5px;line-height:11.5px;color:#333;font-weight:400;letter-spacing:0.000px;white-space:nowrap;">Brand</div>
<div style="left:1824px;top:211.07px;font-size:11.5px;line-height:11.5px;color:#333;font-weight:400;letter-spacing:0.000px;white-space:nowrap;">Category</div>
<div style="left:472px;top:235.0px;width:18px;height:18px;background:transparent;border:2px solid #0f5c94;border-radius:2px;box-sizing:border-box;"></div>
<div style="left:502px;top:239.07px;font-size:11.5px;line-height:11.5px;color:#12609c;font-weight:400;letter-spacing:0.000px;white-space:nowrap;">PO-0013390-D</div>
<div style="left:925px;top:239.07px;font-size:11.5px;line-height:11.5px;color:#222;font-weight:400;letter-spacing:0.000px;white-space:nowrap;">123131</div>
<div style="left:1077px;top:239.07px;font-size:11.5px;line-height:11.5px;color:#222;font-weight:400;letter-spacing:0.000px;white-space:nowrap;">$100.00</div>
<div style="left:1152px;top:239.07px;font-size:11.5px;line-height:11.5px;color:#222;font-weight:400;letter-spacing:0.000px;white-space:nowrap;">$0.00</div>
<div style="left:1228px;top:239.07px;font-size:11.5px;line-height:11.5px;color:#222;font-weight:400;letter-spacing:0.000px;white-space:nowrap;">$100.00</div>
<div style="left:1304px;top:239.07px;font-size:11.5px;line-height:11.5px;color:#7a7a7a;font-weight:400;letter-spacing:0.000px;white-space:nowrap;">Draft</div>
<div style="left:1456px;top:239.07px;font-size:11.5px;line-height:11.5px;color:#222;font-weight:400;letter-spacing:0.000px;white-space:nowrap;">Elite Furniture</div>
<div style="left:1544px;top:239.07px;font-size:11.5px;line-height:11.5px;color:#12609c;font-weight:400;letter-spacing:0.000px;white-space:nowrap;">SO-0037541</div>
<div style="left:1644px;top:239.07px;font-size:11.5px;line-height:11.5px;color:#222;font-weight:400;letter-spacing:0.000px;white-space:nowrap;">Spring Valley</div>
<div style="left:472px;top:260.0px;width:18px;height:18px;background:transparent;border:2px solid #0f5c94;border-radius:2px;box-sizing:border-box;"></div>
<div style="left:502px;top:264.07px;font-size:11.5px;line-height:11.5px;color:#12609c;font-weight:400;letter-spacing:0.000px;white-space:nowrap;">PO-0013389</div>
<div style="left:697px;top:264.07px;font-size:11.5px;line-height:11.5px;color:#222;font-weight:400;letter-spacing:0.000px;white-space:nowrap;">04/21/2021</div>
<div style="left:1077px;top:264.07px;font-size:11.5px;line-height:11.5px;color:#222;font-weight:400;letter-spacing:0.000px;white-space:nowrap;">$0.00</div>
<div style="left:1152px;top:264.07px;font-size:11.5px;line-height:11.5px;color:#222;font-weight:400;letter-spacing:0.000px;white-space:nowrap;">$0.00</div>
<div style="left:1228px;top:264.07px;font-size:11.5px;line-height:11.5px;color:#222;font-weight:400;letter-spacing:0.000px;white-space:nowrap;">$0.00</div>
<div style="left:1304px;top:264.07px;font-size:11.5px;line-height:11.5px;color:#7a7a7a;font-weight:400;letter-spacing:0.000px;white-space:nowrap;">Draft</div>
<div style="left:1644px;top:264.07px;font-size:11.5px;line-height:11.5px;color:#222;font-weight:400;letter-spacing:0.000px;white-space:nowrap;">Spring Valley</div>
<div style="left:472px;top:287.5px;width:18px;height:18px;background:transparent;border:2px solid #0f5c94;border-radius:2px;box-sizing:border-box;"></div>
<div style="left:502px;top:291.57px;font-size:11.5px;line-height:11.5px;color:#12609c;font-weight:400;letter-spacing:0.000px;white-space:nowrap;">PO-0013321-D</div>
<div style="left:697px;top:291.57px;font-size:11.5px;line-height:11.5px;color:#222;font-weight:400;letter-spacing:0.000px;white-space:nowrap;">04/14/2021</div>
<div style="left:925px;top:291.57px;font-size:11.5px;line-height:11.5px;color:#222;font-weight:400;letter-spacing:0.000px;white-space:nowrap;">Arina Vendor</div>
<div style="left:1077px;top:291.57px;font-size:11.5px;line-height:11.5px;color:#222;font-weight:400;letter-spacing:0.000px;white-space:nowrap;">$500.00</div>
<div style="left:1152px;top:291.57px;font-size:11.5px;line-height:11.5px;color:#222;font-weight:400;letter-spacing:0.000px;white-space:nowrap;">$0.00</div>
<div style="left:1228px;top:291.57px;font-size:11.5px;line-height:11.5px;color:#222;font-weight:400;letter-spacing:0.000px;white-space:nowrap;">$500.00</div>
<div style="left:1304px;top:284.47px;font-size:11.5px;line-height:11.5px;color:#7a7a7a;font-weight:400;letter-spacing:0.000px;white-space:nowrap;">Draft</div>
<div style="left:1304px;top:298.57px;font-size:11.5px;line-height:11.5px;color:#7a7a7a;font-weight:400;letter-spacing:0.000px;white-space:nowrap;">Dropship</div>
<div style="left:1456px;top:291.57px;font-size:11.5px;line-height:11.5px;color:#222;font-weight:400;letter-spacing:0.000px;white-space:nowrap;">739 Park Ave</div>
<div style="left:1544px;top:291.57px;font-size:11.5px;line-height:11.5px;color:#12609c;font-weight:400;letter-spacing:0.000px;white-space:nowrap;">2 SOs</div>
<div style="left:1644px;top:291.57px;font-size:11.5px;line-height:11.5px;color:#222;font-weight:400;letter-spacing:0.000px;white-space:nowrap;">Spring Valley</div>
<div style="left:472px;top:315.0px;width:18px;height:18px;background:transparent;border:2px solid #0f5c94;border-radius:2px;box-sizing:border-box;"></div>
<div style="left:502px;top:319.07px;font-size:11.5px;line-height:11.5px;color:#12609c;font-weight:400;letter-spacing:0.000px;white-space:nowrap;">PO-0013289-D</div>
<div style="left:697px;top:319.07px;font-size:11.5px;line-height:11.5px;color:#222;font-weight:400;letter-spacing:0.000px;white-space:nowrap;">04/14/2021</div>
<div style="left:925px;top:319.07px;font-size:11.5px;line-height:11.5px;color:#222;font-weight:400;letter-spacing:0.000px;white-space:nowrap;">Arina Vendor</div>
<div style="left:1077px;top:319.07px;font-size:11.5px;line-height:11.5px;color:#222;font-weight:400;letter-spacing:0.000px;white-space:nowrap;">$1,450.00</div>
<div style="left:1152px;top:319.07px;font-size:11.5px;line-height:11.5px;color:#222;font-weight:400;letter-spacing:0.000px;white-space:nowrap;">$0.00</div>
<div style="left:1228px;top:319.07px;font-size:11.5px;line-height:11.5px;color:#222;font-weight:400;letter-spacing:0.000px;white-space:nowrap;">$1,450.00</div>
<div style="left:1304px;top:319.07px;font-size:11.5px;line-height:11.5px;color:#7a7a7a;font-weight:400;letter-spacing:0.000px;white-space:nowrap;">Draft</div>
<div style="left:1456px;top:319.07px;font-size:11.5px;line-height:11.5px;color:#12609c;font-weight:400;letter-spacing:-0.486px;white-space:nowrap;">4 CUSTOMERS</div>
<div style="left:1544px;top:319.07px;font-size:11.5px;line-height:11.5px;color:#12609c;font-weight:400;letter-spacing:0.000px;white-space:nowrap;">5 SOs</div>
<div style="left:1644px;top:319.07px;font-size:11.5px;line-height:11.5px;color:#222;font-weight:400;letter-spacing:0.000px;white-space:nowrap;">Spring Valley</div>
<div style="left:472px;top:342.5px;width:18px;height:18px;background:transparent;border:2px solid #0f5c94;border-radius:2px;box-sizing:border-box;"></div>
<div style="left:502px;top:346.57px;font-size:11.5px;line-height:11.5px;color:#12609c;font-weight:400;letter-spacing:0.000px;white-space:nowrap;">PO-0013281-D</div>
<div style="left:697px;top:346.57px;font-size:11.5px;line-height:11.5px;color:#222;font-weight:400;letter-spacing:0.000px;white-space:nowrap;">04/14/2021</div>
<div style="left:773px;top:346.57px;font-size:11.5px;line-height:11.5px;color:#222;font-weight:400;letter-spacing:0.000px;white-space:nowrap;">04/16/2021</div>
<div style="left:849px;top:346.57px;font-size:11.5px;line-height:11.5px;color:#222;font-weight:400;letter-spacing:0.000px;white-space:nowrap;">04/16/2021</div>
<div style="left:925px;top:339.47px;font-size:11.5px;line-height:11.5px;color:#222;font-weight:400;letter-spacing:0.000px;white-space:nowrap;">306 Industry</div>
<div style="left:925px;top:353.57px;font-size:11.5px;line-height:11.5px;color:#222;font-weight:400;letter-spacing:0.000px;white-space:nowrap;">Site</div>
<div style="left:1001px;top:346.57px;font-size:11.5px;line-height:11.5px;color:#222;font-weight:400;letter-spacing:0.000px;white-space:nowrap;">55</div>
<div style="left:1077px;top:346.57px;font-size:11.5px;line-height:11.5px;color:#222;font-weight:400;letter-spacing:0.000px;white-space:nowrap;">$125.00</div>
<div style="left:1152px;top:346.57px;font-size:11.5px;line-height:11.5px;color:#222;font-weight:400;letter-spacing:0.000px;white-space:nowrap;">$0.00</div>
<div style="left:1228px;top:346.57px;font-size:11.5px;line-height:11.5px;color:#222;font-weight:400;letter-spacing:0.000px;white-space:nowrap;">$125.00</div>
<div style="left:1304px;top:339.47px;font-size:11.5px;line-height:11.5px;color:#7a7a7a;font-weight:400;letter-spacing:0.000px;white-space:nowrap;">Draft</div>
<div style="left:1304px;top:353.57px;font-size:11.5px;line-height:11.5px;color:#7a7a7a;font-weight:400;letter-spacing:0.000px;white-space:nowrap;">Dropship</div>
<div style="left:1456px;top:346.57px;font-size:11.5px;line-height:11.5px;color:#222;font-weight:400;letter-spacing:0.000px;white-space:nowrap;">Karina</div>
<div style="left:1544px;top:346.57px;font-size:11.5px;line-height:11.5px;color:#12609c;font-weight:400;letter-spacing:0.000px;white-space:nowrap;">SO-0037477</div>
<div style="left:1724px;top:346.57px;font-size:11.5px;line-height:11.5px;color:#222;font-weight:400;letter-spacing:0.000px;white-space:nowrap;">Biscuits</div>
<div style="left:1824px;top:346.57px;font-size:11.5px;line-height:11.5px;color:#222;font-weight:400;letter-spacing:0.000px;white-space:nowrap;">Milka</div>
<div style="left:1644px;top:346.57px;font-size:11.5px;line-height:11.5px;color:#222;font-weight:400;letter-spacing:0.000px;white-space:nowrap;">Spring Valley</div>
<div style="left:472px;top:370.0px;width:18px;height:18px;background:transparent;border:2px solid #0f5c94;border-radius:2px;box-sizing:border-box;"></div>
<div style="left:502px;top:374.07px;font-size:11.5px;line-height:11.5px;color:#12609c;font-weight:400;letter-spacing:0.000px;white-space:nowrap;">PO-0013200-D</div>
<div style="left:697px;top:374.07px;font-size:11.5px;line-height:11.5px;color:#222;font-weight:400;letter-spacing:0.000px;white-space:nowrap;">04/08/2021</div>
<div style="left:925px;top:374.07px;font-size:11.5px;line-height:11.5px;color:#222;font-weight:400;letter-spacing:0.000px;white-space:nowrap;">ktest-vendor</div>
<div style="left:1077px;top:374.07px;font-size:11.5px;line-height:11.5px;color:#222;font-weight:400;letter-spacing:0.000px;white-space:nowrap;">$68.00</div>
<div style="left:1152px;top:374.07px;font-size:11.5px;line-height:11.5px;color:#222;font-weight:400;letter-spacing:0.000px;white-space:nowrap;">$0.00</div>
<div style="left:1228px;top:374.07px;font-size:11.5px;line-height:11.5px;color:#222;font-weight:400;letter-spacing:0.000px;white-space:nowrap;">$68.00</div>
<div style="left:1304px;top:374.07px;font-size:11.5px;line-height:11.5px;color:#7a7a7a;font-weight:400;letter-spacing:0.000px;white-space:nowrap;">Draft</div>
<div style="left:1644px;top:374.07px;font-size:11.5px;line-height:11.5px;color:#222;font-weight:400;letter-spacing:0.000px;white-space:nowrap;">Spring Valley</div>
<div style="left:472px;top:395.0px;width:18px;height:18px;background:transparent;border:2px solid #0f5c94;border-radius:2px;box-sizing:border-box;"></div>
<div style="left:502px;top:399.07px;font-size:11.5px;line-height:11.5px;color:#12609c;font-weight:400;letter-spacing:0.000px;white-space:nowrap;">PO-0013198-D</div>
<div style="left:1077px;top:399.07px;font-size:11.5px;line-height:11.5px;color:#222;font-weight:400;letter-spacing:0.000px;white-space:nowrap;">$50.00</div>
<div style="left:1152px;top:399.07px;font-size:11.5px;line-height:11.5px;color:#222;font-weight:400;letter-spacing:0.000px;white-space:nowrap;">$0.00</div>
<div style="left:1228px;top:399.07px;font-size:11.5px;line-height:11.5px;color:#222;font-weight:400;letter-spacing:0.000px;white-space:nowrap;">$50.00</div>
<div style="left:1304px;top:399.07px;font-size:11.5px;line-height:11.5px;color:#7a7a7a;font-weight:400;letter-spacing:0.000px;white-space:nowrap;">Draft</div>
<div style="left:1644px;top:399.07px;font-size:11.5px;line-height:11.5px;color:#222;font-weight:400;letter-spacing:0.000px;white-space:nowrap;">Spring Valley</div>
<div style="left:472px;top:420.0px;width:18px;height:18px;background:transparent;border:2px solid #0f5c94;border-radius:2px;box-sizing:border-box;"></div>
<div style="left:502px;top:424.07px;font-size:11.5px;line-height:11.5px;color:#12609c;font-weight:400;letter-spacing:0.000px;white-space:nowrap;">PO-0013031-D</div>
<div style="left:1077px;top:424.07px;font-size:11.5px;line-height:11.5px;color:#222;font-weight:400;letter-spacing:0.000px;white-space:nowrap;">$0.00</div>
<div style="left:1152px;top:424.07px;font-size:11.5px;line-height:11.5px;color:#222;font-weight:400;letter-spacing:0.000px;white-space:nowrap;">$0.00</div>
<div style="left:1228px;top:424.07px;font-size:11.5px;line-height:11.5px;color:#222;font-weight:400;letter-spacing:0.000px;white-space:nowrap;">$0.00</div>
<div style="left:1304px;top:424.07px;font-size:11.5px;line-height:11.5px;color:#7a7a7a;font-weight:400;letter-spacing:0.000px;white-space:nowrap;">Draft</div>
<div style="left:1644px;top:424.07px;font-size:11.5px;line-height:11.5px;color:#222;font-weight:400;letter-spacing:0.000px;white-space:nowrap;">Spring Valley</div>
<div style="left:472px;top:445.0px;width:18px;height:18px;background:transparent;border:2px solid #0f5c94;border-radius:2px;box-sizing:border-box;"></div>
<div style="left:502px;top:449.07px;font-size:11.5px;line-height:11.5px;color:#12609c;font-weight:400;letter-spacing:0.000px;white-space:nowrap;">PO-0013030-D</div>
<div style="left:1077px;top:449.07px;font-size:11.5px;line-height:11.5px;color:#222;font-weight:400;letter-spacing:0.000px;white-space:nowrap;">$12.00</div>
<div style="left:1152px;top:449.07px;font-size:11.5px;line-height:11.5px;color:#222;font-weight:400;letter-spacing:0.000px;white-space:nowrap;">$0.00</div>
<div style="left:1228px;top:449.07px;font-size:11.5px;line-height:11.5px;color:#222;font-weight:400;letter-spacing:0.000px;white-space:nowrap;">$12.00</div>
<div style="left:1304px;top:449.07px;font-size:11.5px;line-height:11.5px;color:#7a7a7a;font-weight:400;letter-spacing:0.000px;white-space:nowrap;">Draft</div>
<div style="left:1644px;top:449.07px;font-size:11.5px;line-height:11.5px;color:#222;font-weight:400;letter-spacing:0.000px;white-space:nowrap;">Spring Valley</div>
<div style="left:472px;top:470.0px;width:18px;height:18px;background:transparent;border:2px solid #0f5c94;border-radius:2px;box-sizing:border-box;"></div>
<div style="left:502px;top:474.07px;font-size:11.5px;line-height:11.5px;color:#12609c;font-weight:400;letter-spacing:0.000px;white-space:nowrap;">PO-0013029-D</div>
<div style="left:1077px;top:474.07px;font-size:11.5px;line-height:11.5px;color:#222;font-weight:400;letter-spacing:0.000px;white-space:nowrap;">$13.00</div>
<div style="left:1152px;top:474.07px;font-size:11.5px;line-height:11.5px;color:#222;font-weight:400;letter-spacing:0.000px;white-space:nowrap;">$0.00</div>
<div style="left:1228px;top:474.07px;font-size:11.5px;line-height:11.5px;color:#222;font-weight:400;letter-spacing:0.000px;white-space:nowrap;">$13.00</div>
<div style="left:1304px;top:474.07px;font-size:11.5px;line-height:11.5px;color:#7a7a7a;font-weight:400;letter-spacing:0.000px;white-space:nowrap;">Draft</div>
<div style="left:1644px;top:474.07px;font-size:11.5px;line-height:11.5px;color:#222;font-weight:400;letter-spacing:0.000px;white-space:nowrap;">Spring Valley</div>
<div style="left:472px;top:495.0px;width:18px;height:18px;background:transparent;border:2px solid #0f5c94;border-radius:2px;box-sizing:border-box;"></div>
<div style="left:502px;top:499.07px;font-size:11.5px;line-height:11.5px;color:#12609c;font-weight:400;letter-spacing:0.000px;white-space:nowrap;">PO-0013028-D</div>
<div style="left:1077px;top:499.07px;font-size:11.5px;line-height:11.5px;color:#222;font-weight:400;letter-spacing:0.000px;white-space:nowrap;">$49.00</div>
<div style="left:1152px;top:499.07px;font-size:11.5px;line-height:11.5px;color:#222;font-weight:400;letter-spacing:0.000px;white-space:nowrap;">$0.00</div>
<div style="left:1228px;top:499.07px;font-size:11.5px;line-height:11.5px;color:#222;font-weight:400;letter-spacing:0.000px;white-space:nowrap;">$49.00</div>
<div style="left:1304px;top:499.07px;font-size:11.5px;line-height:11.5px;color:#7a7a7a;font-weight:400;letter-spacing:0.000px;white-space:nowrap;">Draft</div>
<div style="left:1644px;top:499.07px;font-size:11.5px;line-height:11.5px;color:#222;font-weight:400;letter-spacing:0.000px;white-space:nowrap;">Spring Valley</div>
<div style="left:472px;top:520.0px;width:18px;height:18px;background:transparent;border:2px solid #0f5c94;border-radius:2px;box-sizing:border-box;"></div>
<div style="left:502px;top:524.07px;font-size:11.5px;line-height:11.5px;color:#12609c;font-weight:400;letter-spacing:0.000px;white-space:nowrap;">PO-0013027-D</div>
<div style="left:1077px;top:524.07px;font-size:11.5px;line-height:11.5px;color:#222;font-weight:400;letter-spacing:0.000px;white-space:nowrap;">$24.00</div>
<div style="left:1152px;top:524.07px;font-size:11.5px;line-height:11.5px;color:#222;font-weight:400;letter-spacing:0.000px;white-space:nowrap;">$0.00</div>
<div style="left:1228px;top:524.07px;font-size:11.5px;line-height:11.5px;color:#222;font-weight:400;letter-spacing:0.000px;white-space:nowrap;">$24.00</div>
<div style="left:1304px;top:524.07px;font-size:11.5px;line-height:11.5px;color:#7a7a7a;font-weight:400;letter-spacing:0.000px;white-space:nowrap;">Draft</div>
<div style="left:1644px;top:524.07px;font-size:11.5px;line-height:11.5px;color:#222;font-weight:400;letter-spacing:0.000px;white-space:nowrap;">Spring Valley</div>
<div style="left:472px;top:545.0px;width:18px;height:18px;background:transparent;border:2px solid #0f5c94;border-radius:2px;box-sizing:border-box;"></div>
<div style="left:502px;top:549.07px;font-size:11.5px;line-height:11.5px;color:#12609c;font-weight:400;letter-spacing:0.000px;white-space:nowrap;">PO-0013025-D</div>
<div style="left:1077px;top:549.07px;font-size:11.5px;line-height:11.5px;color:#222;font-weight:400;letter-spacing:0.000px;white-space:nowrap;">$12.00</div>
<div style="left:1152px;top:549.07px;font-size:11.5px;line-height:11.5px;color:#222;font-weight:400;letter-spacing:0.000px;white-space:nowrap;">$0.00</div>
<div style="left:1228px;top:549.07px;font-size:11.5px;line-height:11.5px;color:#222;font-weight:400;letter-spacing:0.000px;white-space:nowrap;">$12.00</div>
<div style="left:1304px;top:549.07px;font-size:11.5px;line-height:11.5px;color:#7a7a7a;font-weight:400;letter-spacing:0.000px;white-space:nowrap;">Draft</div>
<div style="left:1644px;top:549.07px;font-size:11.5px;line-height:11.5px;color:#222;font-weight:400;letter-spacing:0.000px;white-space:nowrap;">Spring Valley</div>
<div style="left:472px;top:570.0px;width:18px;height:18px;background:transparent;border:2px solid #0f5c94;border-radius:2px;box-sizing:border-box;"></div>
<div style="left:502px;top:574.07px;font-size:11.5px;line-height:11.5px;color:#12609c;font-weight:400;letter-spacing:0.000px;white-space:nowrap;">PO-0013024-D</div>
<div style="left:1077px;top:574.07px;font-size:11.5px;line-height:11.5px;color:#222;font-weight:400;letter-spacing:0.000px;white-space:nowrap;">$12.00</div>
<div style="left:1152px;top:574.07px;font-size:11.5px;line-height:11.5px;color:#222;font-weight:400;letter-spacing:0.000px;white-space:nowrap;">$0.00</div>
<div style="left:1228px;top:574.07px;font-size:11.5px;line-height:11.5px;color:#222;font-weight:400;letter-spacing:0.000px;white-space:nowrap;">$12.00</div>
<div style="left:1304px;top:574.07px;font-size:11.5px;line-height:11.5px;color:#7a7a7a;font-weight:400;letter-spacing:0.000px;white-space:nowrap;">Draft</div>
<div style="left:1644px;top:574.07px;font-size:11.5px;line-height:11.5px;color:#222;font-weight:400;letter-spacing:0.000px;white-space:nowrap;">Spring Valley</div>
<div style="left:472px;top:595.0px;width:18px;height:18px;background:transparent;border:2px solid #0f5c94;border-radius:2px;box-sizing:border-box;"></div>
<div style="left:502px;top:599.07px;font-size:11.5px;line-height:11.5px;color:#12609c;font-weight:400;letter-spacing:0.000px;white-space:nowrap;">PO-0013022-D</div>
<div style="left:1077px;top:599.07px;font-size:11.5px;line-height:11.5px;color:#222;font-weight:400;letter-spacing:0.000px;white-space:nowrap;">$550.00</div>
<div style="left:1152px;top:599.07px;font-size:11.5px;line-height:11.5px;color:#222;font-weight:400;letter-spacing:0.000px;white-space:nowrap;">$0.00</div>
<div style="left:1228px;top:599.07px;font-size:11.5px;line-height:11.5px;color:#222;font-weight:400;letter-spacing:0.000px;white-space:nowrap;">$550.00</div>
<div style="left:1304px;top:599.07px;font-size:11.5px;line-height:11.5px;color:#7a7a7a;font-weight:400;letter-spacing:0.000px;white-space:nowrap;">Draft</div>
<div style="left:1456px;top:599.07px;font-size:11.5px;line-height:11.5px;color:#222;font-weight:400;letter-spacing:0.000px;white-space:nowrap;">kate</div>
<div style="left:1544px;top:599.07px;font-size:11.5px;line-height:11.5px;color:#12609c;font-weight:400;letter-spacing:0.000px;white-space:nowrap;">SO-0037200</div>
<div style="left:1644px;top:599.07px;font-size:11.5px;line-height:11.5px;color:#222;font-weight:400;letter-spacing:0.000px;white-space:nowrap;">Spring Valley</div>
<div style="left:472px;top:620.0px;width:18px;height:18px;background:transparent;border:2px solid #0f5c94;border-radius:2px;box-sizing:border-box;"></div>
<div style="left:502px;top:624.07px;font-size:11.5px;line-height:11.5px;color:#12609c;font-weight:400;letter-spacing:0.000px;white-space:nowrap;">GDD-004-D</div>
<div style="left:697px;top:624.07px;font-size:11.5px;line-height:11.5px;color:#222;font-weight:400;letter-spacing:0.000px;white-space:nowrap;">03/10/2021</div>
<div style="left:773px;top:624.07px;font-size:11.5px;line-height:11.5px;color:#222;font-weight:400;letter-spacing:0.000px;white-space:nowrap;">03/03/2021</div>
<div style="left:925px;top:624.07px;font-size:11.5px;line-height:11.5px;color:#222;font-weight:400;letter-spacing:0.000px;white-space:nowrap;">GDD</div>
<div style="left:1077px;top:624.07px;font-size:11.5px;line-height:11.5px;color:#222;font-weight:400;letter-spacing:0.000px;white-space:nowrap;">$0.00</div>
<div style="left:1152px;top:624.07px;font-size:11.5px;line-height:11.5px;color:#222;font-weight:400;letter-spacing:0.000px;white-space:nowrap;">$0.00</div>
<div style="left:1228px;top:624.07px;font-size:11.5px;line-height:11.5px;color:#222;font-weight:400;letter-spacing:0.000px;white-space:nowrap;">$0.00</div>
<div style="left:1304px;top:624.07px;font-size:11.5px;line-height:11.5px;color:#7a7a7a;font-weight:400;letter-spacing:0.000px;white-space:nowrap;">Draft</div>
<div style="left:1644px;top:624.07px;font-size:11.5px;line-height:11.5px;color:#222;font-weight:400;letter-spacing:0.000px;white-space:nowrap;">Spring Valley</div>
<div style="left:472px;top:647.5px;width:18px;height:18px;background:transparent;border:2px solid #0f5c94;border-radius:2px;box-sizing:border-box;"></div>
<div style="left:502px;top:651.57px;font-size:11.5px;line-height:11.5px;color:#12609c;font-weight:400;letter-spacing:0.000px;white-space:nowrap;">PO-0012826-D</div>
<div style="left:925px;top:644.47px;font-size:11.5px;line-height:11.5px;color:#222;font-weight:400;letter-spacing:0.000px;white-space:nowrap;">306 Industry</div>
<div style="left:925px;top:658.57px;font-size:11.5px;line-height:11.5px;color:#222;font-weight:400;letter-spacing:0.000px;white-space:nowrap;">Site</div>
<div style="left:1077px;top:651.57px;font-size:11.5px;line-height:11.5px;color:#222;font-weight:400;letter-spacing:0.000px;white-space:nowrap;">$2,700.00</div>
<div style="left:1152px;top:651.57px;font-size:11.5px;line-height:11.5px;color:#222;font-weight:400;letter-spacing:0.000px;white-space:nowrap;">$0.00</div>
<div style="left:1228px;top:651.57px;font-size:11.5px;line-height:11.5px;color:#222;font-weight:400;letter-spacing:0.000px;white-space:nowrap;">$2,700.00</div>
<div style="left:1304px;top:651.57px;font-size:11.5px;line-height:11.5px;color:#7a7a7a;font-weight:400;letter-spacing:0.000px;white-space:nowrap;">Draft</div>
<div style="left:1544px;top:651.57px;font-size:11.5px;line-height:11.5px;color:#12609c;font-weight:400;letter-spacing:0.000px;white-space:nowrap;">AO-0000133</div>
<div style="left:1644px;top:651.57px;font-size:11.5px;line-height:11.5px;color:#222;font-weight:400;letter-spacing:0.000px;white-space:nowrap;">Spring Valley</div>
<div style="left:472px;top:677.5px;width:18px;height:18px;background:transparent;border:2px solid #0f5c94;border-radius:2px;box-sizing:border-box;"></div>
<div style="left:502px;top:681.57px;font-size:11.5px;line-height:11.5px;color:#12609c;font-weight:400;letter-spacing:0.000px;white-space:nowrap;">PO-0012825-D</div>
<div style="left:925px;top:674.47px;font-size:11.5px;line-height:11.5px;color:#222;font-weight:400;letter-spacing:0.000px;white-space:nowrap;">306 Vendor</div>
<div style="left:925px;top:688.57px;font-size:11.5px;line-height:11.5px;color:#222;font-weight:400;letter-spacing:0.000px;white-space:nowrap;">Card</div>
<div style="left:1077px;top:681.57px;font-size:11.5px;line-height:11.5px;color:#222;font-weight:400;letter-spacing:0.000px;white-space:nowrap;">$0.00</div>
<div style="left:1152px;top:681.57px;font-size:11.5px;line-height:11.5px;color:#222;font-weight:400;letter-spacing:0.000px;white-space:nowrap;">$0.00</div>
<div style="left:1228px;top:681.57px;font-size:11.5px;line-height:11.5px;color:#222;font-weight:400;letter-spacing:0.000px;white-space:nowrap;">$0.00</div>
<div style="left:1304px;top:681.57px;font-size:11.5px;line-height:11.5px;color:#7a7a7a;font-weight:400;letter-spacing:0.000px;white-space:nowrap;">Draft</div>
<div style="left:1544px;top:681.57px;font-size:11.5px;line-height:11.5px;color:#12609c;font-weight:400;letter-spacing:0.000px;white-space:nowrap;">AO-0000133</div>
<div style="left:1644px;top:681.57px;font-size:11.5px;line-height:11.5px;color:#222;font-weight:400;letter-spacing:0.000px;white-space:nowrap;">Spring Valley</div>
<div style="left:472px;top:707.5px;width:18px;height:18px;background:transparent;border:2px solid #0f5c94;border-radius:2px;box-sizing:border-box;"></div>
<div style="left:502px;top:711.57px;font-size:11.5px;line-height:11.5px;color:#12609c;font-weight:400;letter-spacing:0.000px;white-space:nowrap;">PO-0012783-D</div>
<div style="left:697px;top:711.57px;font-size:11.5px;line-height:11.5px;color:#222;font-weight:400;letter-spacing:0.000px;white-space:nowrap;">02/03/2021</div>
<div style="left:773px;top:711.57px;font-size:11.5px;line-height:11.5px;color:#222;font-weight:400;letter-spacing:0.000px;white-space:nowrap;">02/03/2021</div>
<div style="left:925px;top:704.47px;font-size:11.5px;line-height:11.5px;color:#222;font-weight:400;letter-spacing:0.000px;white-space:nowrap;">306 Industry</div>
<div style="left:925px;top:718.57px;font-size:11.5px;line-height:11.5px;color:#222;font-weight:400;letter-spacing:0.000px;white-space:nowrap;">Site</div>
<div style="left:1077px;top:711.57px;font-size:11.5px;line-height:11.5px;color:#222;font-weight:400;letter-spacing:0.000px;white-space:nowrap;">$12.00</div>
<div style="left:1152px;top:711.57px;font-size:11.5px;line-height:11.5px;color:#222;font-weight:400;letter-spacing:0.000px;white-space:nowrap;">$0.00</div>
<div style="left:1228px;top:711.57px;font-size:11.5px;line-height:11.5px;color:#222;font-weight:400;letter-spacing:0.000px;white-space:nowrap;">$12.00</div>
<div style="left:1304px;top:711.57px;font-size:11.5px;line-height:11.5px;color:#7a7a7a;font-weight:400;letter-spacing:0.000px;white-space:nowrap;">Draft</div>
<div style="left:1644px;top:711.57px;font-size:11.5px;line-height:11.5px;color:#222;font-weight:400;letter-spacing:0.000px;white-space:nowrap;">Spring Valley</div>
<div style="left:472px;top:737.5px;width:18px;height:18px;background:transparent;border:2px solid #0f5c94;border-radius:2px;box-sizing:border-box;"></div>
<div style="left:502px;top:741.57px;font-size:11.5px;line-height:11.5px;color:#12609c;font-weight:400;letter-spacing:0.000px;white-space:nowrap;">PO-0012780-D</div>
<div style="left:697px;top:741.57px;font-size:11.5px;line-height:11.5px;color:#222;font-weight:400;letter-spacing:0.000px;white-space:nowrap;">02/03/2021</div>
<div style="left:773px;top:741.57px;font-size:11.5px;line-height:11.5px;color:#222;font-weight:400;letter-spacing:0.000px;white-space:nowrap;">02/03/2021</div>
<div style="left:925px;top:734.47px;font-size:11.5px;line-height:11.5px;color:#222;font-weight:400;letter-spacing:0.000px;white-space:nowrap;">306 Industry</div>
<div style="left:925px;top:748.57px;font-size:11.5px;line-height:11.5px;color:#222;font-weight:400;letter-spacing:0.000px;white-space:nowrap;">Site</div>
<div style="left:1077px;top:741.57px;font-size:11.5px;line-height:11.5px;color:#222;font-weight:400;letter-spacing:0.000px;white-space:nowrap;">$5.00</div>
<div style="left:1152px;top:741.57px;font-size:11.5px;line-height:11.5px;color:#222;font-weight:400;letter-spacing:0.000px;white-space:nowrap;">$0.00</div>
<div style="left:1228px;top:741.57px;font-size:11.5px;line-height:11.5px;color:#222;font-weight:400;letter-spacing:0.000px;white-space:nowrap;">$5.00</div>
<div style="left:1304px;top:741.57px;font-size:11.5px;line-height:11.5px;color:#7a7a7a;font-weight:400;letter-spacing:0.000px;white-space:nowrap;">Draft</div>
<div style="left:1456px;top:741.57px;font-size:11.5px;line-height:11.5px;color:#12609c;font-weight:400;letter-spacing:-0.486px;white-space:nowrap;">2 CUSTOMERS</div>
<div style="left:1544px;top:741.57px;font-size:11.5px;line-height:11.5px;color:#12609c;font-weight:400;letter-spacing:0.000px;white-space:nowrap;">2 SOs</div>
<div style="left:1644px;top:741.57px;font-size:11.5px;line-height:11.5px;color:#222;font-weight:400;letter-spacing:0.000px;white-space:nowrap;">Spring Valley</div>
<div style="left:469px;top:999px;width:1451px;height:2px;background:#dadada;"></div>
<div style="left:1496.3px;top:1014.84px;font-size:12px;line-height:12px;color:#222;font-weight:400;letter-spacing:0.148px;white-space:nowrap;">Total Amount:</div>
<div style="left:1574.5px;top:1014.84px;font-size:12px;line-height:12px;color:#222;font-weight:700;letter-spacing:0.051px;white-space:nowrap;">$5,682.00</div>
<div style="left:1639.4px;top:1014.84px;font-size:12px;line-height:12px;color:#222;font-weight:400;letter-spacing:-0.234px;white-space:nowrap;">Total Payments:</div>
<div style="left:1725.5px;top:1014.84px;font-size:12px;line-height:12px;color:#222;font-weight:700;letter-spacing:-0.033px;white-space:nowrap;">$0.00</div>
<div style="left:1766.2px;top:1014.84px;font-size:12px;line-height:12px;color:#222;font-weight:400;letter-spacing:-0.341px;white-space:nowrap;">Open Balance:</div>
<div style="left:1845.5px;top:1014.84px;font-size:12px;line-height:12px;color:#222;font-weight:700;letter-spacing:0.139px;white-space:nowrap;">$5,682.00</div>
<div style="left:661px;top:112px;width:135px;height:56px;box-sizing:border-box;border:4px solid #fa5844;box-shadow:2px 2px 3px rgba(0,0,0,0.75), inset 2px 2px 3px rgba(0,0,0,0.75);"></div>
<div style="left:1625px;top:192px;width:101px;height:589px;box-sizing:border-box;border:4px solid #fa5844;box-shadow:2px 2px 3px rgba(0,0,0,0.75), inset 2px 2px 3px rgba(0,0,0,0.75);"></div>
<div style="left:230px;top:846px;width:264px;height:77px;box-sizing:border-box;border:4px solid #fa5844;box-shadow:2px 2px 3px rgba(0,0,0,0.75), inset 2px 2px 3px rgba(0,0,0,0.75);"></div>
</body></html>
